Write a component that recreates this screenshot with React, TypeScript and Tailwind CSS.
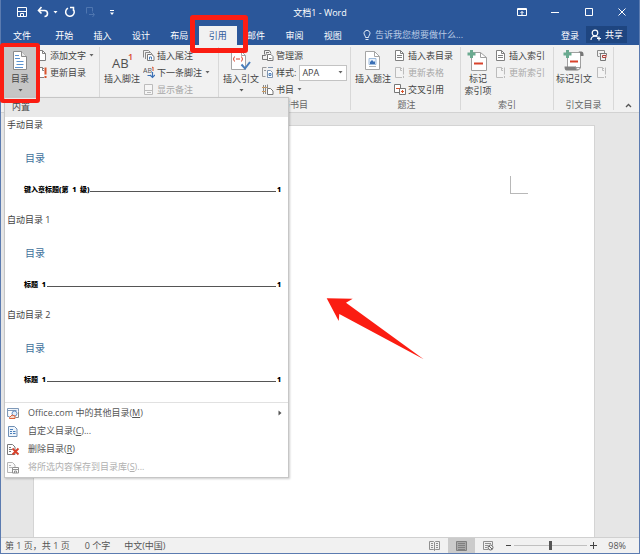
import type { ReactNode } from "react";

const TABS = ["开始", "插入", "设计", "布局", "引用", "邮件", "审阅", "视图"];

const GALLERY = [
  { name: "手动目录", line: "键入章标题(第  1  级)" },
  { name: "自动目录 1", line: "标题  1" },
  { name: "自动目录 2", line: "标题  1" },
];

type IconProps = { w: number; h: number; children: ReactNode; className?: string };

function Icon({ w, h, children, className = "" }: IconProps) {
  return (
    <svg width={w} height={h} viewBox={`0 0 ${w} ${h}`} fill="none" className={`shrink-0 ${className}`} aria-hidden="true">
      {children}
    </svg>
  );
}

function Caret({ className = "text-[#666]" }: { className?: string }) {
  return (
    <Icon w={5} h={3} className={className}>
      <path d="M0.5 0h4L2.5 2.5z" fill="currentColor" />
    </Icon>
  );
}

/* ---------- small ribbon icons, 12 x 13 ---------- */

function PageIcon({ mark, muted }: { mark?: "lines" | "update"; muted?: boolean }) {
  const stroke = muted ? "#bcbcbc" : "#808080";
  return (
    <Icon w={12} h={13}>
      <path d="M1.5 1.5h5l3 3v7h-8z" fill={muted ? "#f4f4f4" : "#fff"} stroke={stroke} />
      <path d="M6.5 1.5v3h3" stroke={stroke} />
      {mark === "lines" && <path d="M3 6.5h5M3 8.5h5" stroke={stroke} />}
      {mark === "update" && (
        <>
          <path d="M8 0h4v13H8z" fill="#f1f1f1" />
          <path d="M9.5 1.5v7M9.5 10v2" stroke={muted ? "#bcbcbc" : "#d9532c"} strokeWidth={muted ? 1 : 2} />
        </>
      )}
    </Icon>
  );
}

function EndnoteIcon() {
  return (
    <Icon w={12} h={13}>
      <path d="M.5 8.5v-7h5l2 2M2.5 10v-6.500h5l2 2" stroke="#8a8a8a" />
      <path d="M4.500 11.500v-6h4l2.500 2v4z" fill="#fff" stroke="#7a7a7a" />
      <path d="M6.500 10.500V8h2v2.500" stroke="#4a7ebb" />
    </Icon>
  );
}

function NextNoteIcon() {
  return (
    <Icon w={12} h={13}>
      <text x="0" y="7" fontSize="7" fill="#555" fontFamily="Open Sans">AB</text>
      <path d="M9 1.500l1-.5v4" stroke="#d9532c" />
      <path d="M4.500 9.500h3M9.500 6v5M7 9l2.500 2.500L12 9" stroke="#3a6fb5" strokeWidth="1.200" />
    </Icon>
  );
}

function ShowNotesIcon() {
  return (
    <Icon w={12} h={13}>
      <path d="M1.500 1.500h8v10h-8z" fill="#f6f6f6" stroke="#bcbcbc" />
      <path d="M2 7.500h7M4 9.500h4" stroke="#bcbcbc" />
    </Icon>
  );
}

function ManageIcon() {
  return (
    <Icon w={12} h={13}>
      <path d="M2.500 5.500v-4h5l1.500 3M.5 6v4.500h5M.5 6.500h3l1-2" stroke="#777" />
      <path d="M4 3.500h3" stroke="#777" />
      <path d="M5.500 5.500h3.500l2 2v4H5.500z" fill="#fff" stroke="#777" />
      <path d="M7 9.500h2.500" stroke="#777" />
    </Icon>
  );
}

function StyleIcon() {
  return (
    <Icon w={12} h={13}>
      <path d="M4.500 1.500H.5v9h3M2 4.500h2" stroke="#9a9a9a" />
      <path d="M6 1.500h5M5.500 4.500h3l2 2v5h-5z" fill="#fff" stroke="#7f95b0" />
      <path d="M7 7.500h2v2H7z" stroke="#4a7ebb" />
    </Icon>
  );
}

function BibliographyIcon() {
  return (
    <Icon w={12} h={13}>
      <path d="M1.500 2v9M3.500 2v9M5.500 1.500v4" stroke="#8a8a8a" />
      <path d="M0 4.500h5M0 8.500h4" stroke="#c99a62" />
      <path d="M5.500 5.500h3l2.500 2.500v3.500H5.500z" fill="#fff" stroke="#777" />
    </Icon>
  );
}

function CrossRefIcon() {
  return (
    <Icon w={12} h={13}>
      <path d="M.5 1.500h6v8h-6z" fill="#fff" stroke="#777" />
      <path d="M5.500 5.500h6v6h-6z" fill="#fff" stroke="#777" />
      <path d="M2 5.500h4M7 8.500h3" stroke="#d9532c" />
      <path d="M8.500 10V7" stroke="#d9532c" />
    </Icon>
  );
}

function CitationTableIcon() {
  return (
    <Icon w={12} h={13}>
      <path d="M1.500 7V1.500h7V4M1.500 7.500h2" stroke="#8a8a8a" />
      <path d="M3.500 4.500h7v2M4.500 5v6.500h5V9" stroke="#777" />
      <path d="M6.500 8.500h3.500V6.500H6.500z" stroke="#b0413a" />
    </Icon>
  );
}

/* ---------- large ribbon icons ---------- */

function TocIcon() {
  return (
    <Icon w={18} h={22}>
      <path d="M2.500 1.500h8l5 5v13h-13z" fill="#fff" stroke="#8a8a8a" />
      <path d="M10.500 1.500v5h5" fill="#e8e8e8" stroke="#8a8a8a" />
      <path d="M4 5.500h4M4 8.500h5M5.500 11.500h7M5.500 14.500h7M4 17.500h8" stroke="#5b93d0" />
    </Icon>
  );
}

function FootnoteIcon() {
  return (
    <Icon w={24} h={22}>
      <text x="2" y="18" fontSize="13" fill="#505050" fontFamily="Open Sans">AB</text>
      <text x="18" y="10" fontSize="9" fontWeight="600" fill="#d9432c" fontFamily="Open Sans">1</text>
    </Icon>
  );
}

function CitationIcon() {
  return (
    <Icon w={20} h={22}>
      <path d="M.5 1.500h10l4 4v14H.5z" fill="#fff" stroke="#a5a5a5" />
      <path d="M10.500 1.500v4h4" stroke="#a5a5a5" />
      <path d="M3.500 6.500q-2 2.500 0 5M10.500 6.500q2 2.500 0 5M5 9h4" stroke="#d9432c" />
      <path d="M10.500 14.500l3.500 4 5-6.500" stroke="#4a7ebb" strokeWidth="2" />
    </Icon>
  );
}

function CaptionIcon() {
  return (
    <Icon w={16} h={22}>
      <path d="M.5 1.500h9l5 5v13H.5z" fill="#fff" stroke="#a5a5a5" />
      <path d="M9.500 1.500v5h5" stroke="#a5a5a5" />
      <path d="M4 8.500h7v6H4z" fill="#e9f1fa" stroke="#9dbbdd" />
      <path d="M5 14v-2l2-2 2 2 1-1v3z" fill="#3a6fb5" />
      <path d="M4 16.500h7" stroke="#b5b5b5" />
    </Icon>
  );
}

function MarkIndexIcon() {
  return (
    <Icon w={22} h={22}>
      <path d="M4.500 2.500h9l6 5v13h-15z" fill="#fff" stroke="#a0a0a0" />
      <path d="M13.500 2.500v5h6" stroke="#a0a0a0" />
      <path d="M4.500 0v8M.5 4h8" stroke="#6aaa90" strokeWidth="3" />
      <path d="M7 13.500h9" stroke="#d9432c" strokeWidth="2" />
    </Icon>
  );
}

function MarkCitationIcon() {
  return (
    <Icon w={22} h={22}>
      <path d="M4.500 2.500h13v15h-13z" fill="#fff" stroke="#a0a0a0" />
      <path d="M15.500 1.500h3q2 0 2 2.500v2h-3V4q0-1.500-2-2.500z" fill="#777" />
      <path d="M1.500 16.500h11q0 3 2.500 4H3.500q-2 0-2-4z" fill="#808080" />
      <path d="M12.500 16.500q0 3 2.500 3.500 2.500-.5 2.500-3.500" stroke="#909090" />
      <path d="M4.500 0v8M.5 4h8" stroke="#6aaa90" strokeWidth="3" />
      <path d="M7 11.500h8" stroke="#d9432c" strokeWidth="2" />
    </Icon>
  );
}

/* ---------- ribbon building blocks ---------- */

function Group({ label, className, children }: { label: string; className: string; children: ReactNode }) {
  return (
    <section className={`flex shrink-0 flex-col ${className}`} aria-label={label}>
      <div className="flex h-[51px]">{children}</div>
      <div className="h-[14px] text-center leading-[14px] text-[#666]">{label}</div>
    </section>
  );
}

function Divider() {
  return <div className="mb-0.5 w-px shrink-0 bg-[#d8d8d8]" />;
}

type BigProps = { icon: ReactNode; lines: string[]; caret?: boolean; className?: string };

function BigButton({ icon, lines, caret, className = "w-10" }: BigProps) {
  return (
    <button type="button" className={`flex shrink-0 flex-col items-center pt-[3px] ${className}`}>
      {icon}
      <span className="mt-px leading-[12px] whitespace-nowrap">
        {lines.map((l) => (
          <span key={l} className="block">{l}</span>
        ))}
      </span>
      {caret && <Caret className="mt-1 text-[#555]" />}
    </button>
  );
}

type SmallProps = { icon: ReactNode; label: string; caret?: boolean; muted?: boolean };

function SmallButton({ icon, label, caret, muted }: SmallProps) {
  return (
    <button
      type="button"
      disabled={muted}
      aria-label={label}
      className={`flex h-[17px] items-center gap-0.5 whitespace-nowrap ${muted ? "text-[#a8a8a8]" : ""}`}
    >
      {icon}
      <span>{label}</span>
      {caret && <Caret className="ml-px text-[#666]" />}
    </button>
  );
}

function TitleBar() {
  return (
    <div className="grid h-[26px] grid-cols-[1fr_auto_1fr] items-center">
      <div className="flex items-center pb-0.5 pl-[15px]">
        <button type="button" aria-label="保存">
          <Icon w={12} h={12}>
            <path d="M1.500 1.500h9v9h-9z" stroke="#fff" />
            <path d="M2 5.500h8M4.500 10.500v-3h3v3" stroke="#fff" />
          </Icon>
        </button>
        <button type="button" aria-label="撤消" className="ml-[9px] flex items-center gap-1">
          <Icon w={12} h={12}>
            <path d="M4.500 1L1.500 4.500l3 3M2 4.500h5.500q3 0 3 3T7.500 10.500" stroke="#fff" strokeWidth="1.600" />
          </Icon>
          <Caret className="text-white" />
        </button>
        <button type="button" aria-label="重复" className="ml-1.5">
          <Icon w={12} h={12}>
            <path d="M4 2.200A4.300 4.300 0 1 0 9 3M6 1.500h3.500V5" stroke="#fff" strokeWidth="1.500" />
          </Icon>
        </button>
        <button type="button" aria-label="触摸模式" className="ml-2">
          <Icon w={13} h={12}>
            <path d="M2.500 7.500v-6h6v4M5 8.500h5M8.500 6.500l2 2-2 2.500" stroke="#4f76b0" />
          </Icon>
        </button>
        <button type="button" aria-label="自定义快速访问工具栏" className="ml-3">
          <Icon w={6} h={7}>
            <path d="M1 1.500h4" stroke="#fff" />
            <path d="M1 3.500h4L3 6z" fill="#fff" />
          </Icon>
        </button>
      </div>
      <h1 className="text-white">文档1 - Word</h1>
      <div className="grid w-[134px] grid-cols-4 place-items-center justify-self-end pb-0.5">
        <button type="button" aria-label="功能区显示选项">
          <Icon w={10} h={8}>
            <path d="M.5 .5h9v7h-9z" stroke="#fff" />
            <path d="M.5 1.500h9M5 7V3.500M3.500 5L5 3.500 6.500 5" stroke="#fff" />
          </Icon>
        </button>
        <button type="button" aria-label="最小化">
          <Icon w={8} h={8}><path d="M0 4.500h8" stroke="#fff" /></Icon>
        </button>
        <button type="button" aria-label="最大化">
          <Icon w={8} h={8}><path d="M.5 .5h7v7h-7z" stroke="#fff" /></Icon>
        </button>
        <button type="button" aria-label="关闭">
          <Icon w={8} h={8}><path d="M.5 .5l7 7M7.500 .5l-7 7" stroke="#fff" /></Icon>
        </button>
      </div>
    </div>
  );
}

function TabRow() {
  return (
    <div className="flex h-[19px] items-stretch text-white">
      <button type="button" className="w-[42px] shrink-0">文件</button>
      <nav className="ml-0.5 grid w-[307px] shrink-0 grid-cols-8">
        {TABS.map((t) => (
          <button key={t} type="button" className={t === "引用" ? "bg-[#f1f1f1] text-[#2b579a]" : ""}>
            {t}
          </button>
        ))}
      </nav>
      <label className="ml-[11px] flex min-w-0 flex-1 items-center gap-1 pb-px">
        <Icon w={8} h={12}>
          <path d="M2.500 8.500q0-1.500-1-2.500a3 3 0 1 1 5 0q-1 1-1 2.500zM2.500 10.500h3" stroke="#dbe5f3" />
        </Icon>
        <input
          type="text"
          aria-label="操作说明搜索"
          placeholder="告诉我您想要做什么..."
          className="w-full min-w-0 bg-transparent outline-none placeholder:text-[#b9cae4]"
        />
      </label>
      <button type="button" className="shrink-0 px-[7px]">登录</button>
      <button type="button" className="mr-3 mb-0.5 flex w-[41px] shrink-0 items-center justify-center gap-1 bg-[#1e4580]">
        <Icon w={11} h={12}>
          <circle cx="5" cy="4" r="2.800" stroke="#fff" strokeWidth="1.200" />
          <path d="M1 11q0-3.500 4-4 2 0 3 1.500M7 9.500h4M9 7.500v4" stroke="#fff" strokeWidth="1.200" />
        </Icon>
        共享
      </button>
    </div>
  );
}

type MenuRowProps = { icon: ReactNode; text: string; hot: string; after?: string; muted?: boolean; arrow?: boolean };

function MenuRow({ icon, text, hot, after = "", muted, arrow }: MenuRowProps) {
  return (
    <button
      type="button"
      disabled={muted}
      className={`flex h-[18px] w-full items-center pr-[6px] pl-[2px] text-left ${muted ? "text-[#b0b0b0]" : "text-[#555]"}`}
    >
      {icon}
      <span className="ml-2 flex-1">
        {text}(<u>{hot}</u>){after}
      </span>
      {arrow && (
        <Icon w={4} h={6}><path d="M.5 .5v5L3.500 3z" fill="#555" /></Icon>
      )}
    </button>
  );
}

function TocMenu() {
  return (
    <div className="absolute top-[52px] left-[3px] z-10 w-[285px] border border-[#c6c6c6] bg-white text-[#444] shadow-[1px_1px_2px_rgba(0,0,0,0.2)]">
      <div className="h-[19px] bg-[#e9e9e9] pl-[7px] leading-[18px]">内置</div>
      {GALLERY.map((g) => (
        <button key={g.name} type="button" className="flex h-[95px] w-full flex-col pl-0.5 text-left">
          <span className="leading-[15px]">{g.name}</span>
          <span className="mt-[19px] pl-[18px] text-[10px] leading-[14px] text-[#41719c]">目录</span>
          <span className="mt-5 flex w-full pr-[7px] pl-[17px] text-[7px] leading-[10px] font-black whitespace-pre text-black">
            {g.line}
            <span className="mx-px mb-[3px] flex-1 border-b border-[#555]" />1
          </span>
        </button>
      ))}
      <div className="border-t border-[#e1e1e1] py-px">
        <MenuRow
          text="Office.com 中的其他目录"
          hot="M"
          arrow
          icon={
            <Icon w={13} h={13}>
              <path d="M.5 1.500h11v3M.5 1.500v8h2M.5 3.500h9" fill="#eef4fa" stroke="#7f99b8" />
              <path d="M11.500 4.500v6h-3" stroke="#8a8a8a" />
              <circle cx="7.500" cy="6.500" r="2.500" fill="#e3edf8" stroke="#5f8cc2" />
              <path d="M2.500 10.500l2.500-2.500 3 1v2.500H2.500z" fill="#f3d9cc" stroke="#d9633c" />
            </Icon>
          }
        />
        <MenuRow
          text="自定义目录"
          hot="C"
          after="..."
          icon={
            <Icon w={13} h={13}>
              <path d="M1.500 1.500h6l2.500 2.500v7.500H1.500z" fill="#eef4fa" stroke="#6f8fb5" />
              <path d="M3 4.500h3M3 6.500h2M6 6.500h2.500M3 8.500h2M6 8.500h2.500" stroke="#4a7ebb" />
            </Icon>
          }
        />
        <MenuRow
          text="删除目录"
          hot="R"
          icon={
            <Icon w={13} h={13}>
              <path d="M.5 1.500h5l2.500 2.500v7.500H.5zM2 4.500h2M2 6.500h3M2 8.500h2" fill="#fff" stroke="#7a7a7a" />
              <path d="M5.500 5.500l6 6M11.500 5.500l-6 6" stroke="#d8402a" strokeWidth="1.800" />
            </Icon>
          }
        />
        <MenuRow
          text="将所选内容保存到目录库"
          hot="S"
          after="..."
          muted
          icon={
            <Icon w={13} h={13}>
              <path d="M.5 1.500h5l2.500 2.500v7.500H.5zM2 4.500h2M2 6.500h3" fill="#fafafa" stroke="#b5b5b5" />
              <path d="M5.500 6.500h6v5.500h-6z" fill="#fff" stroke="#909090" />
              <path d="M6 8.500h5M7.500 12v-2h2v2" stroke="#909090" />
            </Icon>
          }
        />
      </div>
    </div>
  );
}

function Ribbon() {
  return (
    <div className="relative flex items-stretch border-b border-[#d2d2d2] bg-[#f1f1f1] pt-0.5 text-[#444]">
      <Group label="目录" className="w-[98px] pl-[3px]">
        <BigButton className="w-8 bg-[#c6c6c6]" icon={<TocIcon />} lines={["目录"]} caret />
        <div>
          <SmallButton icon={<PageIcon />} label="添加文字" caret />
          <SmallButton icon={<PageIcon mark="update" />} label="更新目录" />
        </div>
      </Group>
      <Divider />
      <Group label="脚注" className="w-[118px] pl-0.5">
        <BigButton icon={<FootnoteIcon />} lines={["插入脚注"]} />
        <div className="pl-px">
          <SmallButton icon={<EndnoteIcon />} label="插入尾注" />
          <SmallButton icon={<NextNoteIcon />} label="下一条脚注" caret />
          <SmallButton icon={<ShowNotesIcon />} label="显示备注" muted />
        </div>
      </Group>
      <Divider />
      <Group label="引文与书目" className="w-[131px] pl-0.5">
        <BigButton icon={<CitationIcon />} lines={["插入引文"]} caret />
        <div className="pl-px">
          <SmallButton icon={<ManageIcon />} label="管理源" />
          <div className="flex h-[17px] items-center gap-0.5">
            <StyleIcon />
            <label htmlFor="cite-style" className="whitespace-nowrap">样式:</label>
            <span className="relative ml-px flex items-center">
              <select id="cite-style" className="h-4 w-12 appearance-none border border-[#c3c3c3] bg-white pl-0.5 outline-none">
                <option>APA</option>
              </select>
              <Caret className="pointer-events-none absolute right-1 text-[#666]" />
            </span>
          </div>
          <SmallButton icon={<BibliographyIcon />} label="书目" caret />
        </div>
      </Group>
      <Divider />
      <Group label="题注" className="w-[109px] pl-0.5">
        <BigButton icon={<CaptionIcon />} lines={["插入题注"]} />
        <div className="pl-px">
          <SmallButton icon={<PageIcon mark="lines" />} label="插入表目录" />
          <SmallButton icon={<PageIcon mark="update" muted />} label="更新表格" muted />
          <SmallButton icon={<CrossRefIcon />} label="交叉引用" />
        </div>
      </Group>
      <Divider />
      <Group label="索引" className="w-[92px]">
        <BigButton className="w-[34px]" icon={<MarkIndexIcon />} lines={["标记", "索引项"]} />
        <div>
          <SmallButton icon={<PageIcon mark="lines" />} label="插入索引" />
          <SmallButton icon={<PageIcon mark="update" muted />} label="更新索引" muted />
        </div>
      </Group>
      <Divider />
      <Group label="引文目录" className="w-[59px]">
        <BigButton icon={<MarkCitationIcon />} lines={["标记引文"]} />
        <div className="pl-0.5">
          <button type="button" aria-label="插入引文目录" className="flex h-[17px] items-center"><CitationTableIcon /></button>
          <button type="button" aria-label="更新引文目录" disabled className="flex h-[17px] items-center"><PageIcon mark="update" muted /></button>
        </div>
      </Group>
      <Divider />
      <button type="button" aria-label="折叠功能区" className="ml-auto self-end px-[7px] pb-1">
        <Icon w={7} h={5}><path d="M1 4l2.500-2.500L6 4" stroke="#555" strokeWidth="1.300" /></Icon>
      </button>
      <TocMenu />
    </div>
  );
}

function StatusBar() {
  return (
    <footer className="flex h-4 items-center border-t border-[#d0d0d0] bg-[#f1f1f1] pr-[13px] pl-1 text-[#555]">
      <span>第 1 页，共 1 页</span>
      <span className="ml-[15px]">0 个字</span>
      <span className="ml-[14px]">中文(中国)</span>
      <button type="button" aria-label="阅读视图" className="ml-auto flex w-[27px] justify-center">
        <Icon w={11} h={10}>
          <path d="M.5 .5h4l1 1 1-1h4v8h-4l-1 1-1-1h-4zM5.500 1.500v8M2 2.500h2M2 4.500h2M2 6.500h2M7 2.500h2M7 4.500h2M7 6.500h2" stroke="#909090" />
        </Icon>
      </button>
      <button type="button" aria-label="页面视图" className="flex h-full w-[27px] items-center justify-center bg-[#cbcbcb]">
        <Icon w={11} h={10}>
          <path d="M.5 .5h10v9H.5zM2 2.500h7M2 4.500h7M2 6.500h7M2 8.500h7" fill="#a8a8a8" stroke="#808080" />
        </Icon>
      </button>
      <button type="button" aria-label="Web 版式视图" className="flex w-[27px] justify-center">
        <Icon w={11} h={10}>
          <path d="M5 8.500H.5v-8h9V4M2 2.500h6M2 4.500h3M2 6.500h2" stroke="#909090" />
          <circle cx="7.500" cy="6.500" r="2.500" stroke="#666" />
          <path d="M6 5l3 3" stroke="#666" />
        </Icon>
      </button>
      <button type="button" aria-label="缩小" className="ml-1">
        <Icon w={5} h={7}><path d="M0 3.500h5" stroke="#444" /></Icon>
      </button>
      <input
        type="range"
        aria-label="缩放"
        min={0}
        max={100}
        defaultValue={49}
        className="mx-[3px] h-3 w-[73px] appearance-none bg-transparent [&::-webkit-slider-runnable-track]:h-px [&::-webkit-slider-runnable-track]:bg-[#c0c0c0] [&::-webkit-slider-thumb]:-mt-[4px] [&::-webkit-slider-thumb]:h-[9px] [&::-webkit-slider-thumb]:w-[3px] [&::-webkit-slider-thumb]:appearance-none [&::-webkit-slider-thumb]:bg-[#555]"
      />
      <button type="button" aria-label="放大">
        <Icon w={7} h={7}><path d="M0 3.500h7M3.500 0v7" stroke="#444" /></Icon>
      </button>
      <span className="ml-[11px]">98%</span>
    </footer>
  );
}

export default function App() {
  return (
    <div className="relative flex min-h-screen flex-col border border-t-0 border-[#5b7bb0] bg-[#e6e6e6] font-['Open_Sans','Noto_Sans_CJK_SC',sans-serif] text-[9px] leading-[12px]">
      <header className="bg-[#2b579a]">
        <TitleBar />
        <TabRow />
      </header>
      <Ribbon />
      <main className="flex flex-1 flex-col pt-3 pr-11 pl-8">
        <div className="flex-1 border border-b-0 border-[#d4d4d4] bg-white pt-[50px] pr-[66px]">
          <div className="ml-auto h-[18px] w-[18px] border-b border-l border-[#b8b8b8]" />
        </div>
      </main>
      <StatusBar />

      {/* call-outs */}
      <div className="pointer-events-none absolute top-[15px] left-[189px] z-20 h-[38px] w-[58px] rounded-[3px] border-[5px] border-[#fb1d12]" />
      <div className="pointer-events-none absolute top-[43px] -left-px z-20 h-[60px] w-10 rounded-[3px] border-4 border-[#fb1d12]" />
      <svg width="98" height="62" viewBox="0 0 98 62" className="pointer-events-none absolute top-[298px] left-[325px] z-20" aria-hidden="true">
        <path d="M.7 .3L26.700 .7 20 4.700 97.700 61.300 13.300 16 12.700 23z" fill="#fb1d12" />
      </svg>
    </div>
  );
}
